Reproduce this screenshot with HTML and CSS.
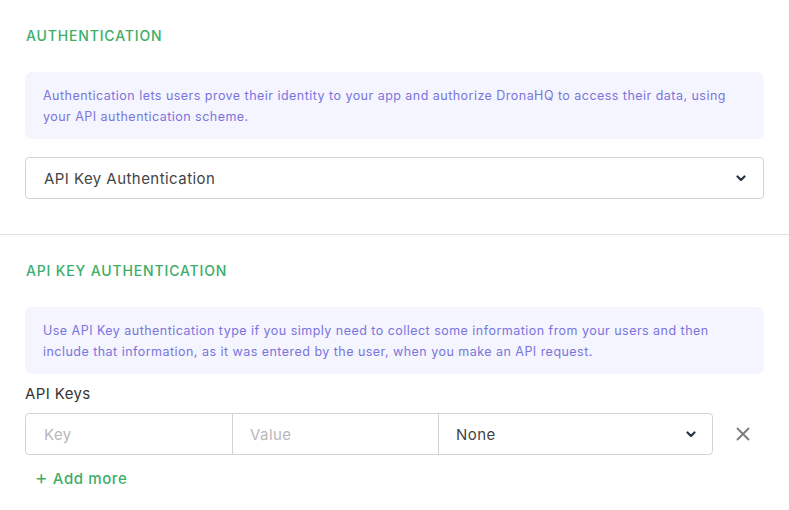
FILE: index.html
```html
<!DOCTYPE html>
<html lang="en">
<head>
<meta charset="utf-8">
<title>Authentication</title>
<link rel="stylesheet" href="styles.css">
</head>
<body>
<section class="section section-top">
  <h2 class="heading">AUTHENTICATION</h2>
  <div class="info">Authentication lets users prove their identity to your app and authorize DronaHQ to access their data, using your API authentication scheme.</div>
  <div class="select select-full">
    <span class="select-text">API Key Authentication</span>
    <svg class="chevron" width="10" height="7" viewBox="0 0 10 7"><path d="M1.5 1.5 L5 5 L8.5 1.5" fill="none" stroke="#2b3445" stroke-width="2.2" stroke-linecap="round" stroke-linejoin="round"/></svg>
  </div>
</section>
<section class="section">
  <h2 class="heading">API KEY AUTHENTICATION</h2>
  <div class="info">Use API Key authentication type if you simply need to collect some information from your users and then include that information, as it was entered by the user, when you make an API request.</div>
  <div class="label">API Keys</div>
  <div class="row">
    <div class="group">
      <div class="cell cell-key"><span class="placeholder">Key</span></div>
      <div class="cell cell-value"><span class="placeholder">Value</span></div>
      <div class="cell cell-select">
        <span class="select-text">None</span>
        <svg class="chevron" width="10" height="7" viewBox="0 0 10 7"><path d="M1.5 1.5 L5 5 L8.5 1.5" fill="none" stroke="#2b3445" stroke-width="2.2" stroke-linecap="round" stroke-linejoin="round"/></svg>
      </div>
    </div>
    <div class="remove">
      <svg width="14" height="14" viewBox="0 0 14 14"><path d="M1.5 1.5 L12.5 12.5 M12.5 1.5 L1.5 12.5" stroke="#7a7a7a" stroke-width="1.8" stroke-linecap="round"/></svg>
    </div>
  </div>
  <div class="add-more"><span class="plus">+</span> Add more</div>
</section>
</body>
</html>
```
FILE: styles.css
```css
html, body {
  margin: 0;
  padding: 0;
  background: #ffffff;
}
body {
  font-family: "Inter", "Open Sans", sans-serif;
  color: #3a3a3a;
  width: 789px;
  height: 510px;
  overflow: hidden;
}
.section {
  padding: 26px 25px 0 25px;
}
.section-top {
  padding-bottom: 35px;
  border-bottom: 1px solid #e2e2e2;
}
.heading {
  margin: 0 0 0 1px;
  font-size: 14px;
  line-height: 20px;
  font-weight: 500;
  color: #3dad68;
  letter-spacing: 0.85px;
}
.info {
  margin-top: 26px;
  background: #f4f5fe;
  border-radius: 7px;
  padding: 13px 18px 12px 18px;
  font-size: 12.5px;
  line-height: 21px;
  color: #7a74dc;
  letter-spacing: 0.47px;
}
.select {
  margin-top: 18px;
  height: 42px;
  box-sizing: border-box;
  border: 1px solid #d3d3d3;
  border-radius: 4px;
  display: flex;
  align-items: center;
  justify-content: space-between;
  padding: 0 17px 0 18px;
}
.select-text {
  font-size: 15px;
  color: #444444;
  letter-spacing: 0.45px;
}
.chevron {
  display: block;
}
.label {
  margin-top: 10px;
  font-size: 15px;
  line-height: 20px;
  color: #363636;
  letter-spacing: 0.4px;
}
.row {
  margin-top: 9px;
  display: flex;
  align-items: center;
}
.group {
  display: flex;
  height: 42px;
  width: 688px;
  box-sizing: border-box;
  border: 1px solid #d3d3d3;
  border-radius: 4px;
}
.cell {
  display: flex;
  align-items: center;
  box-sizing: border-box;
}
.cell-key {
  width: 207px;
  padding-left: 18px;
  border-right: 1px solid #d3d3d3;
}
.cell-value {
  width: 206px;
  padding-left: 17px;
  border-right: 1px solid #d3d3d3;
}
.cell-select {
  flex: 1;
  justify-content: space-between;
  padding: 0 16px 0 17px;
}
.placeholder {
  font-size: 15px;
  color: #b8b8b8;
  letter-spacing: 0.45px;
}
.remove {
  margin-left: 23px;
  display: flex;
  align-items: center;
}
.remove svg {
  display: block;
}
.add-more {
  margin-top: 13px;
  margin-left: 10px;
  font-size: 15px;
  line-height: 20px;
  color: #3dad68;
  font-weight: 500;
  letter-spacing: 0.6px;
}
.plus {
  font-size: 19px;
  font-weight: 400;
}
```
